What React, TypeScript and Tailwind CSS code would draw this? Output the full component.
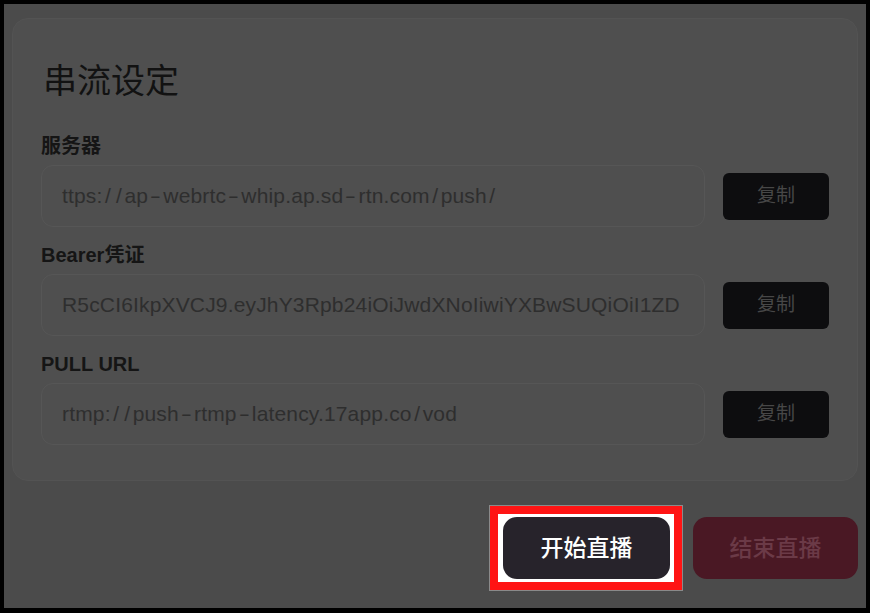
import React from 'react';

const fields = [
  { label: '服务器', value: 'ttps://ap-webrtc-whip.ap.sd-rtn.com/push/' },
  { label: 'Bearer凭证', value: 'R5cCI6IkpXVCJ9.eyJhY3Rpb24iOiJwdXNoIiwiYXBwSUQiOiI1ZD' },
  { label: 'PULL URL', value: 'rtmp://push-rtmp-latency.17app.co/vod' },
];

const font = { fontFamily: '"Liberation Sans", "Noto Sans CJK SC", sans-serif' };

// hyphens and slashes are drawn wider in the original font
function Value({ text }: { text: string }) {
  return (
    <span className="text-[21px] tracking-[0.15px] text-[#2e2e2e]">
      {text.split('').map((ch, i) => {
        if (ch === '-') {
          return (
            <span key={i} className="inline-block mx-[4px] scale-x-[1.6]">
              -
            </span>
          );
        }
        if (ch === '/') {
          return (
            <span key={i} className="inline-block mx-[2.5px]">
              /
            </span>
          );
        }
        return ch;
      })}
    </span>
  );
}

export default function App() {
  return (
    <div className="w-[870px] h-[613px] bg-black pt-[4px] pl-[4px]" style={font}>
      <div className="w-[862px] h-[604px] bg-[#4b4b4b] pt-[14px] px-[8px] flex flex-col">
        {/* settings card */}
        <div className="h-[463px] rounded-[16px] border border-[#535353] bg-[#4f4f4f] pl-[28px] pr-[28px] pt-[42px]">
          <h1 className="text-[34px] leading-[40px] text-[#121212] pl-[2px]">串流设定</h1>

          <div className="mt-[33px] flex flex-col gap-[16px]">
            {fields.map((f) => (
              <div key={f.label}>
                <div className="text-[20px] leading-[24px] font-semibold text-[#151515] mb-[7px]">{f.label}</div>
                <div className="flex items-center gap-[18px]">
                  <div className="w-[664px] h-[62px] rounded-[12px] border border-[#565656] bg-[#4f4f4f] pl-[20px] flex items-center overflow-hidden whitespace-nowrap">
                    <Value text={f.value} />
                  </div>
                  <button className="w-[106px] h-[47px] rounded-[6px] bg-[#0d0d0f] text-[19px] text-[#474747]">复制</button>
                </div>
              </div>
            ))}
          </div>
        </div>

        {/* actions */}
        <div className="mt-[25px] flex justify-end items-center gap-[11px]">
          <div className="border-[8px] border-[#ff1414] bg-white pl-[5px] pr-[4px] py-[3px] outline outline-1 outline-[#8a8a8a]">
            <button className="w-[167px] h-[62px] rounded-[14px] bg-[#27232b] text-white text-[23px] font-medium">开始直播</button>
          </div>
          <button className="w-[165px] h-[62px] rounded-[14px] bg-[#4a1824] text-[#6b3a47] text-[23px] font-medium">结束直播</button>
        </div>
      </div>
    </div>
  );
}
